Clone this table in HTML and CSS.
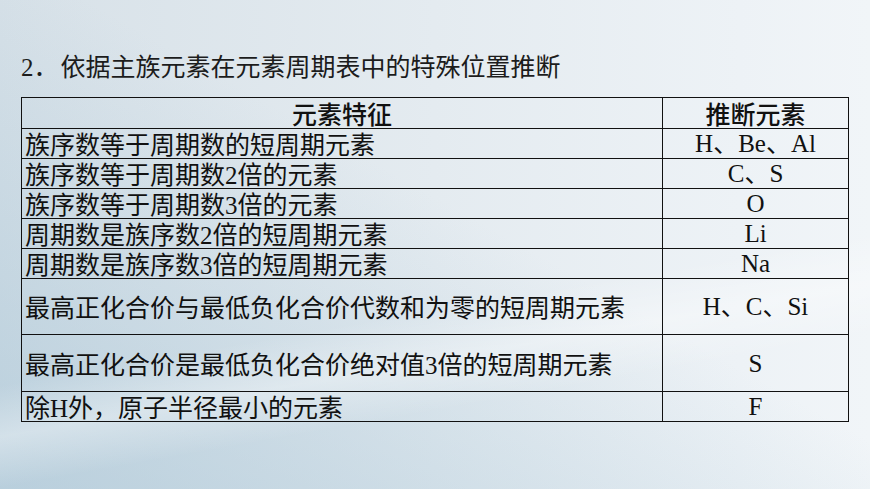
FILE: index.html
```html
<!DOCTYPE html>
<html lang="zh-CN">
<head>
<meta charset="utf-8">
<title>依据主族元素在元素周期表中的特殊位置推断</title>
<link rel="stylesheet" href="styles.css">
</head>
<body>
<main class="slide">
  <h2 class="title"><span class="num">2</span><span class="dot">．</span>依据主族元素在元素周期表中的特殊位置推断</h2>
  <table class="elements">
    <thead>
      <tr><th class="feature">元素特征</th><th class="result">推断元素</th></tr>
    </thead>
    <tbody>
      <tr><td>族序数等于周期数的短周期元素</td><td class="c">H、Be、Al</td></tr>
      <tr><td>族序数等于周期数<span class="num">2</span>倍的元素</td><td class="c">C、S</td></tr>
      <tr><td>族序数等于周期数<span class="num">3</span>倍的元素</td><td class="c">O</td></tr>
      <tr><td>周期数是族序数<span class="num">2</span>倍的短周期元素</td><td class="c">Li</td></tr>
      <tr><td>周期数是族序数<span class="num">3</span>倍的短周期元素</td><td class="c">Na</td></tr>
      <tr class="t1"><td>最高正化合价与最低负化合价代数和为零的短周期元素</td><td class="c">H、C、Si</td></tr>
      <tr class="t2"><td>最高正化合价是最低负化合价绝对值<span class="num">3</span>倍的短周期元素</td><td class="c">S</td></tr>
      <tr><td>除<span class="num">H</span>外，原子半径最小的元素</td><td class="c">F</td></tr>
    </tbody>
  </table>
</main>
</body>
</html>
```

FILE: styles.css
```css
html, body {
  margin: 0;
  padding: 0;
}
body {
  width: 870px;
  height: 489px;
  overflow: hidden;
  font-family: "Liberation Serif", "Noto Sans CJK SC", serif;
  color: #111;
  background:
    linear-gradient(170deg, rgba(255,255,255,0) 0%, rgba(255,255,255,0) 60%, rgba(255,255,255,0.35) 68%, rgba(255,255,255,0) 76%),
    linear-gradient(to top right, rgba(160,192,211,0.55) 0%, rgba(160,192,211,0) 55%),
    linear-gradient(to right, #d7e1e8 0%, #e4ebf0 50%, #edf2f6 85%, #f1f5f8 100%);
}
.slide {
  padding: 50px 0 0 21px;
}
.title {
  margin: 0;
  font-size: 25px;
  line-height: 30px;
  font-weight: normal;
  color: #1c1c1c;
  font-family: "Noto Sans CJK SC", sans-serif;
}
.title .dot {
  margin-right: 2px;
}
.num {
  font-family: "Liberation Serif", serif;
  line-height: 1;
}
.elements {
  margin-top: 17px;
  border-collapse: collapse;
  width: 826px;
  table-layout: fixed;
  font-size: 25px;
}
.elements th,
.elements td {
  border: 1px solid #111;
  padding: 0 3px;
  line-height: 29px;
  height: 29px;
  white-space: nowrap;
  vertical-align: middle;
}
.elements th {
  font-family: "Noto Sans CJK SC", sans-serif;
  font-weight: 500;
  line-height: 30px;
  height: 30px;
  text-align: center;
}
.feature {
  width: 634px;
}
.result {
  width: 179px;
}
.elements td {
  text-align: left;
  font-family: "Noto Sans CJK SC", sans-serif;
}
.elements td.c {
  text-align: center;
  font-family: "Liberation Serif", "Noto Sans CJK SC", serif;
}
.elements tr.t1 td {
  height: 55px;
}
.elements tr.t2 td {
  height: 56px;
}
```
